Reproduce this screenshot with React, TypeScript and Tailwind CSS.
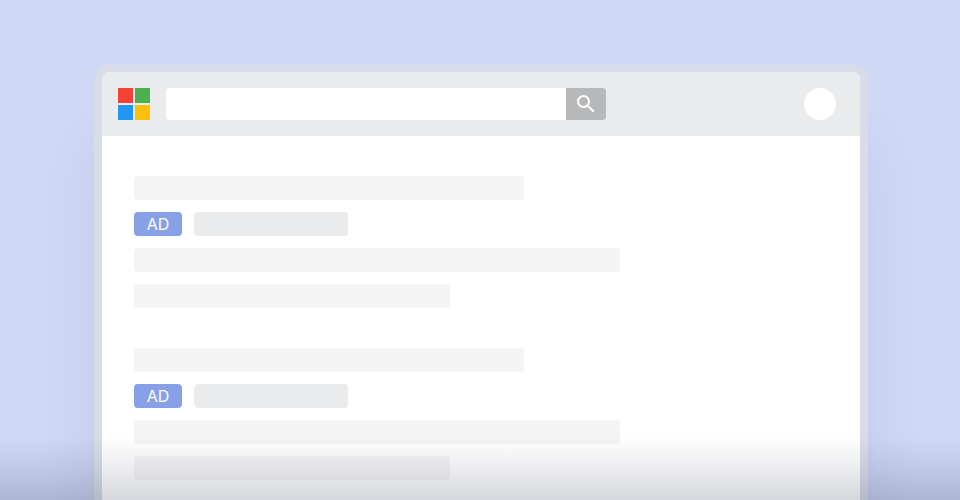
import { MdSearch } from 'react-icons/md';

const results = [1, 2];

function Logo() {
  return (
    <div className="grid shrink-0 grid-cols-2 gap-[2px]">
      <span className="size-[15px] bg-[#f44336]" />
      <span className="size-[15px] bg-[#4caf50]" />
      <span className="size-[15px] bg-[#2196f3]" />
      <span className="size-[15px] bg-[#ffc107]" />
    </div>
  );
}

function SearchBar() {
  return (
    <form className="flex h-8 w-full max-w-[440px] overflow-hidden rounded" onSubmit={(e) => e.preventDefault()}>
      <input type="search" aria-label="Search" className="min-w-0 flex-1 bg-white px-3 text-base outline-none" />
      <button type="submit" aria-label="Search" className="flex w-10 items-center justify-center bg-[#b7b8ba] text-white">
        <MdSearch className="size-6" />
      </button>
    </form>
  );
}

function AdResult() {
  return (
    <article className="space-y-3">
      <div className="h-6 max-w-[390px] rounded bg-[#f4f4f4]" />
      <div className="flex gap-3">
        <span className="flex h-6 w-12 items-center justify-center rounded bg-[#88a0e8] text-base text-white">AD</span>
        <div className="h-6 w-[154px] rounded bg-[#eaebed]" />
      </div>
      <div className="h-6 max-w-[486px] rounded bg-[#f4f4f4]" />
      <div className="h-6 max-w-[316px] rounded bg-[#f4f4f4]" />
    </article>
  );
}

export default function App() {
  return (
    <div className="relative h-screen overflow-hidden bg-[#cfd8f5] pt-16 pr-[92px] pl-[94px] font-[family-name:Inter,sans-serif]">
      <div className="min-h-full rounded-2xl bg-[#d8dce8] p-2 shadow-[0_72px_64px_-8px_rgba(50,60,110,0.1)]">
        <div className="min-h-screen overflow-hidden rounded-lg bg-white">
          <header className="flex h-16 items-center gap-4 bg-[#eaebed] pr-6 pl-4">
            <Logo />
            <SearchBar />
            <button type="button" aria-label="Account" className="ml-auto size-8 shrink-0 rounded-full bg-white" />
          </header>

          <main className="space-y-10 px-8 pt-10">
            {results.map((id) => (
              <AdResult key={id} />
            ))}
          </main>
        </div>
      </div>

      {/* Fade at the bottom edge */}
      <div className="pointer-events-none absolute inset-x-0 bottom-0 h-16 bg-linear-to-b from-[#141c3800] via-[#141c3814] to-[#141c382e]" />
    </div>
  );
}
